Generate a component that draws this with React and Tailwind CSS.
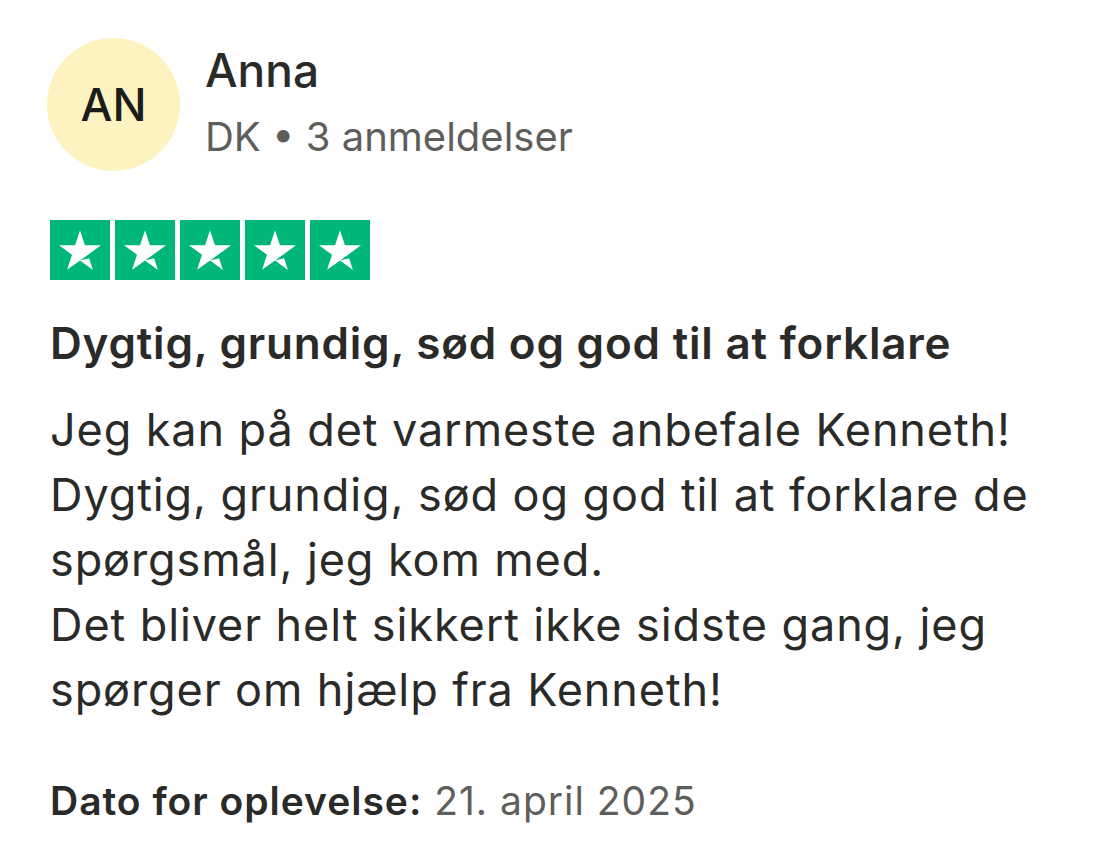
import React from "react";

const Star = () => (
  <div className="w-[60px] h-[60px] bg-[#00b67a] flex items-center justify-center">
    <svg viewBox="0 0 96 96" className="w-[60px] h-[60px]">
      <path
        fill="#fff"
        d="M48 64.7L62.6 61l6.1 18.8L48 64.7zm33.6-24.3H55.9L48 16.2l-7.9 24.2H14.4l20.8 15-7.9 24.2 20.8-15 12.8-9.2 20.7-15z"
      />
    </svg>
  </div>
);

const App = () => {
  return (
    <div className="w-[1096px] h-[852px] bg-white pt-[38px] pl-[47px] text-[#2a2a28] font-['Inter',sans-serif] overflow-hidden">
      <div className="flex items-start gap-[25px]">
        <div className="w-[133px] h-[133px] rounded-full bg-[#fdf3c0] flex items-center justify-center">
          <span className="text-[45px] font-medium text-[#1c1c1c] leading-none">AN</span>
        </div>
        <div className="mt-[5px]">
          <div className="text-[46px] leading-[54px] font-medium">Anna</div>
          <div className="mt-[16px] text-[40px] leading-[48px] text-[#5e5e5c]">
            DK • 3 anmeldelser
          </div>
        </div>
      </div>

      <div className="ml-[3px] mt-[49px] flex gap-[5px]">
        <Star />
        <Star />
        <Star />
        <Star />
        <Star />
      </div>

      <div className="ml-[3px]">
        <h2 className="mt-[37px] text-[44px] leading-[52px] font-semibold tracking-[0.018em]">
          Dygtig, grundig, sød og god til at forklare
        </h2>
        <p className="mt-[28px] w-[1000px] text-[45px] leading-[65px] tracking-[0.02em]">
          Jeg kan på det varmeste anbefale Kenneth!
          <br />
          Dygtig, grundig, sød og god til at forklare de spørgsmål, jeg kom med.
          <br />
          Det bliver helt sikkert ikke sidste gang, jeg spørger om hjælp fra Kenneth!
        </p>
        <div className="mt-[56px] text-[39px] leading-[46px] tracking-[0.025em]">
          <span className="font-semibold">Dato for oplevelse:</span>{" "}
          <span className="text-[#5e5e5c]">21. april 2025</span>
        </div>
      </div>
    </div>
  );
};

export default App;
